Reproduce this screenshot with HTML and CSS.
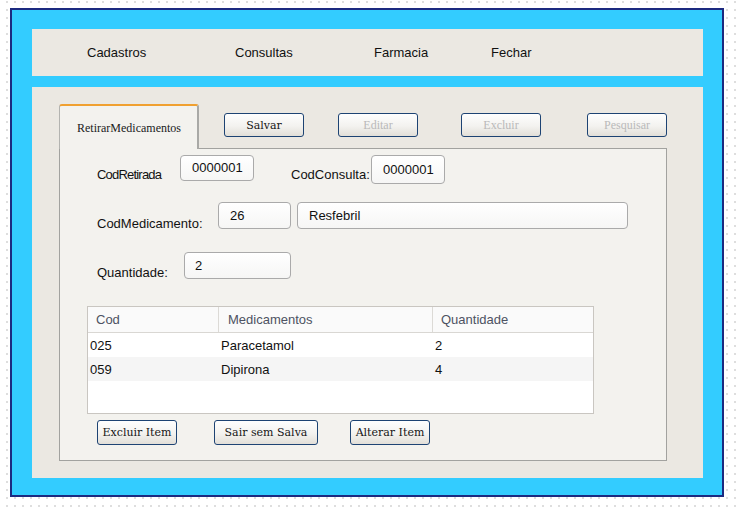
FILE: index.html
```html
<!DOCTYPE html>
<html>
<head>
<meta charset="utf-8">
<link rel="stylesheet" href="styles.css">
</head>
<body>
<div class="frame">
  <nav class="menu">
    <span class="menu-item w1">Cadastros</span>
    <span class="menu-item w2">Consultas</span>
    <span class="menu-item w3">Farmacia</span>
    <span class="menu-item">Fechar</span>
  </nav>
  <section class="panel">
    <div class="tabs">
      <div class="tabbar">
        <div class="tab">RetirarMedicamentos</div>
        <button class="btn top-btn b-salvar">Salvar</button>
        <button class="btn top-btn disabled b-editar">Editar</button>
        <button class="btn top-btn disabled b-excluir">Excluir</button>
        <button class="btn top-btn disabled b-pesquisar">Pesquisar</button>
      </div>
      <div class="tab-box">
        <div class="row row1">
          <span class="label l-retirada">CodRetirada</span>
          <div class="field f-retirada">0000001</div>
          <span class="label l-consulta">CodConsulta:</span>
          <div class="field f-consulta">0000001</div>
        </div>
        <div class="row row2">
          <span class="label l-medic">CodMedicamento:</span>
          <div class="field f-cod">26</div>
          <div class="field f-nome">Resfebril</div>
        </div>
        <div class="row row3">
          <span class="label l-qtd">Quantidade:</span>
          <div class="field f-qtd">2</div>
        </div>
        <div class="grid">
          <div class="g-head">
            <div class="h-cell c1">Cod</div>
            <div class="h-cell c2">Medicamentos</div>
            <div class="h-cell c3">Quantidade</div>
          </div>
          <div class="g-row">
            <div class="cell">025</div>
            <div class="cell">Paracetamol</div>
            <div class="cell">2</div>
          </div>
          <div class="g-row alt">
            <div class="cell">059</div>
            <div class="cell">Dipirona</div>
            <div class="cell">4</div>
          </div>
        </div>
        <div class="actions">
          <button class="btn act b-exitem">Excluir Item</button>
          <button class="btn act b-sair">Sair sem Salva</button>
          <button class="btn act b-alt">Alterar Item</button>
        </div>
      </div>
    </div>
  </section>
</div>
</body>
</html>
```

FILE: styles.css
```css
html, body {
  margin: 0;
  padding: 0;
}
body {
  width: 736px;
  height: 508px;
  overflow: hidden;
  background-color: #ffffff;
  background-image: radial-gradient(circle at 1px 1px, #dedede 0.9px, rgba(255,255,255,0) 1.1px);
  background-size: 8px 8px;
  background-position: 6px 1px;
  font-family: "Liberation Sans", Arial, sans-serif;
  font-size: 13px;
  color: #111;
}
.frame {
  box-sizing: border-box;
  margin: 8px 0 0 10px;
  width: 714px;
  height: 489px;
  border: 2px solid #1c2a80;
  background: #33ccff;
  padding: 19px 19px 17px 20px;
  display: flex;
  flex-direction: column;
  gap: 11px;
}
.menu {
  height: 47px;
  background: #ebe8e2;
  display: flex;
  align-items: center;
  padding-left: 55px;
}
.menu-item {
  color: #111;
  font-size: 13px;
}
.w1 { width: 148px; }
.w2 { width: 139px; }
.w3 { width: 117px; }

.panel {
  height: 391px;
  box-sizing: border-box;
  background: #ebe8e2;
  padding: 17px 36px 17px 27px;
}
.tabs {
  width: 608px;
  height: 357px;
  display: flex;
  flex-direction: column;
}
.tabbar {
  height: 44px;
  display: flex;
  align-items: flex-start;
  position: relative;
  z-index: 1;
}
.tab {
  box-sizing: border-box;
  width: 140px;
  height: 45px;
  background: #f3f2ee;
  border-top: 2px solid #f0a030;
  border-left: 1px solid #b3b3b0;
  border-right: 2px solid #a9a9a6;
  border-radius: 3px 3px 0 0;
  padding: 2px 0 0 17px;
  display: flex;
  align-items: center;
  font-family: "Liberation Serif", "Times New Roman", serif;
  font-size: 12px;
  color: #1a1a1a;
}
.btn {
  box-sizing: border-box;
  margin: 0;
  padding: 0;
  border: 1px solid #1d4373;
  border-radius: 3px;
  background: linear-gradient(#fefefe, #f3f2ef 55%, #e2dfd8);
  font-family: "DejaVu Serif", serif;
  font-size: 11px;
  color: #151515;
  cursor: default;
}
.btn.disabled {
  font-family: "Liberation Serif", "Times New Roman", serif;
  font-size: 12px;
  color: #b9b9b9;
}
.top-btn {
  width: 80px;
  height: 24px;
  margin-top: 9px;
}
.b-salvar { margin-left: 25px; }
.b-editar { margin-left: 34px; }
.b-excluir { margin-left: 43px; }
.b-pesquisar { margin-left: 46px; }

.tab-box {
  box-sizing: border-box;
  height: 313px;
  background: #f3f2ee;
  border: 1px solid #a2a29f;
}
.row {
  display: flex;
  align-items: flex-start;
  padding-left: 37px;
}
.row1 { margin-top: 6px; height: 29px; }
.row2 { margin-top: 18px; height: 27px; }
.row3 { margin-top: 23px; height: 27px; }
.label {
  display: block;
  line-height: 15px;
  white-space: nowrap;
  color: #111;
}
.row1 .label { margin-top: 12px; }
.row2 .label { margin-top: 14px; }
.row3 .label { margin-top: 13px; }
.l-retirada { width: 83px; letter-spacing: -0.8px; }
.l-consulta { width: 80px; margin-left: 37px; }
.l-medic { width: 121px; }
.l-qtd { width: 87px; }
.field {
  box-sizing: border-box;
  border: 1px solid #aaaaaa;
  border-radius: 4px;
  background: linear-gradient(#ffffff, #f6f6f5);
  padding: 0 0 1px 11px;
  display: flex;
  align-items: center;
  line-height: 15px;
  color: #111;
}
.f-retirada { width: 74px; height: 26px; }
.f-consulta { width: 74px; height: 29px; }
.f-cod { width: 73px; height: 27px; }
.f-nome { width: 331px; height: 27px; margin-left: 6px; }
.f-qtd { width: 107px; height: 27px; padding-left: 10px; }

.grid {
  box-sizing: border-box;
  width: 507px;
  height: 108px;
  margin: 27px 0 0 27px;
  border: 1px solid #c9c6c1;
  background: #ffffff;
}
.g-head {
  display: grid;
  grid-template-columns: 131px 214px 1fr;
  height: 26px;
  background: #fafafa;
  border-bottom: 1px solid #d9d7d3;
  box-sizing: border-box;
}
.h-cell {
  display: flex;
  align-items: center;
  padding-left: 8px;
  color: #4d5262;
  border-right: 1px solid #dcdad6;
}
.h-cell.c2 { padding-left: 9px; }
.h-cell.c3 { border-right: none; }
.g-row {
  display: grid;
  grid-template-columns: 131px 214px 1fr;
  height: 24px;
  background: #ffffff;
}
.g-row.alt { background: #f5f5f5; }
.cell {
  display: flex;
  align-items: center;
  padding-left: 2px;
  color: #111;
}
.g-row .cell:nth-child(2) { padding-left: 2px; }
.g-row .cell:nth-child(3) { padding-left: 2px; }

.actions {
  display: flex;
  margin-top: 6px;
  padding-left: 37px;
}
.act {
  height: 25px;
  width: 80px;
}
.b-sair { width: 104px; margin-left: 37px; }
.b-alt { margin-left: 32px; }
```
